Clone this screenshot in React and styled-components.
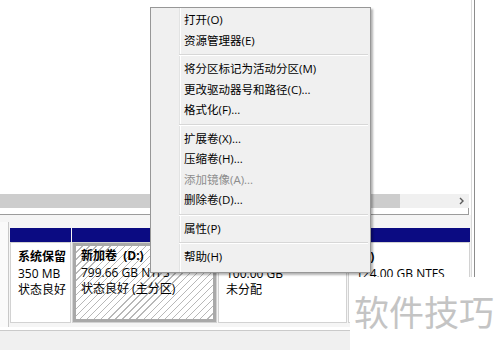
import React from "react";
import styled, { createGlobalStyle } from "styled-components";

const GlobalStyle = createGlobalStyle`
  body {
    margin: 0;
    background: #ffffff;
    font-family: "Open Sans", "Noto Sans CJK SC", sans-serif;
    font-size: 12px;
    color: #000000;
  }
`;

const Page = styled.div`
  position: relative;
  width: 500px;
  height: 350px;
  overflow: hidden;
  background: #ffffff;
`;

const Window = styled.div`
  width: 475px;
  height: 350px;
  box-sizing: border-box;
  border-right: 1px solid #8c8c8c;
  padding-right: 2px;
`;

const Inner = styled.div`
  display: flex;
  flex-direction: column;
  height: 100%;
  border-right: 1px solid #d9d9d9;
`;

const ListPane = styled.div`
  height: 194px;
  background: #ffffff;
`;

const HScroll = styled.div`
  display: flex;
  align-items: center;
  width: 469px;
  height: 14px;
  background: #f0f0f0;
`;

const Thumb = styled.div`
  width: 400px;
  height: 100%;
  background: #cdcdcd;
`;

const ScrollArrow = styled.div`
  margin-left: auto;
  width: 16px;
  display: flex;
  justify-content: center;
`;

const Splitter = styled.div`
  width: 468px;
  height: 6px;
  border-bottom: 1px solid #9c9c9c;
  border-right: 1px solid #9c9c9c;
`;

const DiskRow = styled.div`
  display: flex;
  height: 112px;
  background: #f5f5f5;
`;

const DiskLabel = styled.div`
  width: 8px;
  margin-top: 7px;
  background: #fafafa;
  border-right: 1px solid #c8c8c8;
`;

const Partitions = styled.div`
  display: flex;
  gap: 1px;
  padding: 13px 0 0 1px;
`;

const Partition = styled.div`
  display: flex;
  flex-direction: column;
  width: ${(p) => p.$w}px;
`;

const Bar = styled.div`
  height: 14px;
  background: ${(p) => (p.$free ? "#000000" : "#0b0b82")};
`;

const Box = styled.div`
  height: 81px;
  box-sizing: border-box;
  background: #ffffff;
  border: 1px solid #d2d2d2;
  padding: ${(p) => (p.$selected ? "0" : "2px")};
`;

const Content = styled.div`
  height: 100%;
  box-sizing: border-box;
  padding: ${(p) => (p.$selected ? "2px 0 0 5px" : "4px 0 0 5px")};
  border: ${(p) => (p.$selected ? "3px solid #a9a9a9" : "none")};
  background: ${(p) =>
    p.$selected
      ? "repeating-linear-gradient(135deg, #ffffff 0 4px, #b8b8b8 4px 5px)"
      : "#ffffff"};
  line-height: 16.5px;
  white-space: pre;
  overflow: hidden;
`;

const Name = styled.div`
  font-weight: 700;
`;

const Line = styled.div``;

const Footer = styled.div`
  flex: 1;
  margin-top: 3px;
  border-top: 1px solid #cacaca;
  background: #f0f0f0;
`;

const Menu = styled.div`
  position: absolute;
  left: 150px;
  top: 7px;
  width: 221px;
  box-sizing: border-box;
  padding: 2px 2px 4px;
  border: 1px solid #979797;
  font-size: 11.5px;
  background: linear-gradient(
    to right,
    #f0f0f0 28px,
    #e2e3e3 28px 29px,
    #ffffff 29px 30px,
    #f0f0f0 30px
  );
  box-shadow: 2px 2px 2px rgba(0, 0, 0, 0.3);
`;

const Item = styled.div`
  height: 20.5px;
  line-height: 20.5px;
  padding-left: 31px;
  color: ${(p) => (p.$disabled ? "#8d8d8d" : "#000000")};
`;

const Separator = styled.div`
  height: 0;
  margin: 3px 0 3px 26px;
  border-top: 1px solid #d7d7d7;
  border-bottom: 1px solid #ffffff;
`;

const Watermark = styled.div`
  position: absolute;
  left: 350px;
  top: 277px;
  width: 150px;
  height: 73px;
  box-sizing: border-box;
  padding: 0 0 6px 4px;
  display: flex;
  align-items: center;
  background: #ffffff;
  color: #c4c4c4;
  font-family: "Noto Sans CJK SC", sans-serif;
  font-size: 35px;
`;

const menu = [
  { t: "打开(O)" },
  { t: "资源管理器(E)" },
  { sep: true },
  { t: "将分区标记为活动分区(M)" },
  { t: "更改驱动器号和路径(C)..." },
  { t: "格式化(F)..." },
  { sep: true },
  { t: "扩展卷(X)..." },
  { t: "压缩卷(H)..." },
  { t: "添加镜像(A)...", off: true },
  { t: "删除卷(D)..." },
  { sep: true },
  { t: "属性(P)" },
  { sep: true },
  { t: "帮助(H)" },
];

const parts = [
  { w: 61, name: "系统保留", lines: ["350 MB", "状态良好"] },
  { w: 145, name: "新加卷  (D:)", lines: ["799.66 GB NTFS", "状态良好 (主分区)"], selected: true },
  { w: 129, name: " ", lines: ["100.00 GB", "未分配"], free: true },
  { w: 122, name: "(E:)", lines: ["124.00 GB NTFS", "状态良好 (主分区)"] },
];

const App = () => {
  return (
    <>
      <GlobalStyle />
      <Page>
        <Window>
          <Inner>
            <ListPane />
            <HScroll>
              <Thumb />
              <ScrollArrow>
                <svg width="5" height="8" viewBox="0 0 5 8">
                  <path d="M1 1 L4 4 L1 7" fill="none" stroke="#5a5a5a" strokeWidth="1.4" />
                </svg>
              </ScrollArrow>
            </HScroll>
            <Splitter />
            <DiskRow>
              <DiskLabel />
              <Partitions>
                {parts.map((p, i) => (
                  <Partition key={i} $w={p.w}>
                    <Bar $free={p.free} />
                    <Box $selected={p.selected}>
                      <Content $selected={p.selected}>
                        <Name>{p.name}</Name>
                        {p.lines.map((l) => (
                          <Line key={l}>{l}</Line>
                        ))}
                      </Content>
                    </Box>
                  </Partition>
                ))}
              </Partitions>
            </DiskRow>
            <Footer />
          </Inner>
        </Window>
        <Menu>
          {menu.map((m, i) =>
            m.sep ? <Separator key={i} /> : <Item key={i} $disabled={m.off}>{m.t}</Item>
          )}
        </Menu>
        <Watermark>软件技巧</Watermark>
      </Page>
    </>
  );
};

export default App;
